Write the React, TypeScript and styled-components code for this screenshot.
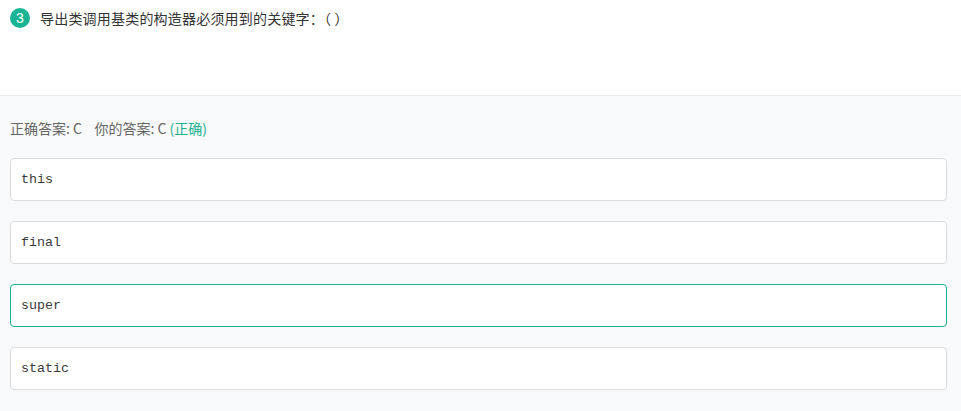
import React from "react";
import styled, { createGlobalStyle } from "styled-components";

const Global = createGlobalStyle`
  html, body { margin: 0; padding: 0; background: #f8f9fa; }
  body { font-family: "Microsoft YaHei", "Noto Sans CJK SC", "Liberation Sans", sans-serif; }
`;

const Page = styled.div`
  width: 961px;
  height: 411px;
  overflow: hidden;
  display: flex;
  flex-direction: column;
`;

const Header = styled.div`
  background: #fff;
  height: 96px;
  box-sizing: border-box;
  border-bottom: 1px solid #ebebeb;
  padding: 8px 10px 0;
  display: flex;
  align-items: flex-start;
  gap: 10px;
`;

const Badge = styled.span`
  width: 20px;
  height: 20px;
  border-radius: 50%;
  background: #1ab394;
  color: #fff;
  font-size: 14px;
  line-height: 20px;
  text-align: center;
  font-family: "Liberation Sans", sans-serif;
  flex: none;
`;

const Question = styled.div`
  font-size: 14px;
  letter-spacing: 0.2px;
  line-height: 20px;
  color: #333;
`;

const Body = styled.div`
  flex: 1;
  background: #f8f9fa;
  padding: 22px 14px 0 10px;
  display: flex;
  flex-direction: column;
`;

const AnswerLine = styled.div`
  font-size: 14px;
  line-height: 20px;
  color: #666;
  margin-bottom: 20px;
  white-space: pre;
`;

const Correct = styled.span`
  color: #1ab394;
`;

const Options = styled.div`
  display: flex;
  flex-direction: column;
  gap: 20px;
`;

const Option = styled.div<{ $selected?: boolean }>`
  height: 43px;
  box-sizing: border-box;
  background: #fff;
  border: 1px solid ${(p) => (p.$selected ? "#1ab394" : "#dcdcdc")};
  border-radius: 4px;
  padding: 0 10px;
  display: flex;
  align-items: center;
  font-family: "Liberation Mono", monospace;
  font-size: 13.3px;
  color: #3a3a3a;
`;

const options = ["this", "final", "super", "static"];

export default function App() {
  return (
    <Page>
      <Global />
      <Header>
        <Badge>3</Badge>
        <Question>导出类调用基类的构造器必须用到的关键字：（ ）</Question>
      </Header>
      <Body>
        <AnswerLine>
          {"正确答案: C    你的答案: C "}
          <Correct>(正确)</Correct>
        </AnswerLine>
        <Options>
          {options.map((o, i) => (
            <Option key={o} $selected={i === 2}>
              {o}
            </Option>
          ))}
        </Options>
      </Body>
    </Page>
  );
}
